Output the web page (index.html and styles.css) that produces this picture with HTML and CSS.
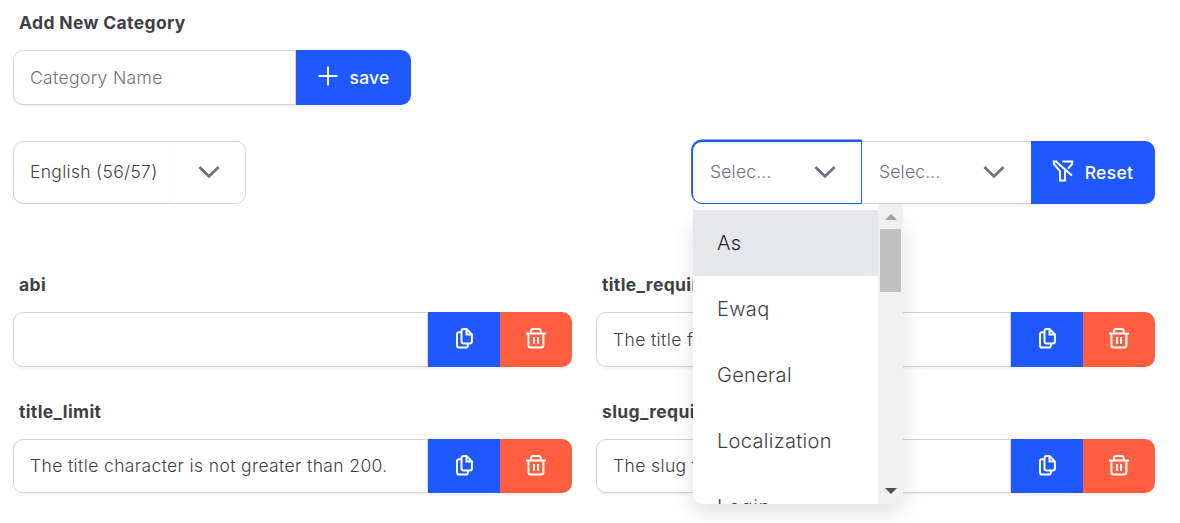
FILE: index.html
```html
<!DOCTYPE html>
<html lang="en">
<head>
<meta charset="utf-8">
<title>Categories</title>
<link rel="stylesheet" href="styles.css">
</head>
<body>
<svg class="sprite" aria-hidden="true">
  <symbol id="copy" viewBox="0 0 22 22"><path d="M8 5.3H6.2Q4 5.3 4 7.5V18.5Q4 20.6 6.2 20.6H12.7Q14.9 20.6 14.9 18.5V16.7M10.7 2H13.5L18.9 7.4V14.2Q18.9 16.4 16.7 16.4H10.7Q8.5 16.4 8.5 14.2V4.2Q8.5 2 10.7 2ZM13.5 2V7.4H18.9"/></symbol>
  <symbol id="trash" viewBox="0 0 22 22"><path d="M1 6.5H21M3.4 6.5V18Q3.4 20.5 5.8 20.5H16Q18.4 20.5 18.4 18V6.5M6 6V4.4Q6 2 8.4 2H13.4Q15.8 2 15.8 4.4V6M9 10V16.7M13 10V16.7"/></symbol>
  <symbol id="chevron" viewBox="0 0 22 14"><path d="M1.4 1.9L11 11.4L20.6 1.9"/></symbol>
</svg>
<main class="page">
  <h1 class="label">Add New Category</h1>
  <div class="group add">
    <div class="input placeholder">Category Name</div>
    <button class="btn save"><svg class="plus" viewBox="0 0 22 22"><path d="M11 1.5V20.5M1.5 11H20.5"/></svg><span>save</span></button>
  </div>
  <div class="toolbar">
    <div class="language"><span class="value">English (56/57)</span><svg class="chevron"><use href="#chevron"/></svg></div>
    <div class="filters">
      <div class="select active"><span>Selec...</span><svg class="chevron"><use href="#chevron"/></svg>
        <div class="menu">
          <div class="options">
            <div class="option selected">As</div>
            <div class="option">Ewaq</div>
            <div class="option">General</div>
            <div class="option">Localization</div>
            <div class="option">Login</div>
          </div>
          <div class="scrollbar"><i class="up"></i><i class="thumb"></i><i class="down"></i></div>
        </div>
      </div>
      <div class="select"><span>Selec...</span><svg class="chevron"><use href="#chevron"/></svg></div>
      <button class="btn reset"><svg class="funnel" viewBox="0 0 22 22"><path d="M5 1.5H1.8V3.8L8 11.2V20.6H13V10.6M4 1.5L19.9 15.5M10.2 1.5H20.2V3.8L16 8.6"/></svg><span>Reset</span></button>
    </div>
  </div>
  <div class="grid">
    <section><h2 class="label">abi</h2><div class="group"><div class="input"></div><button class="btn action"><svg class="icon"><use href="#copy"/></svg></button><button class="btn action danger"><svg class="icon"><use href="#trash"/></svg></button></div></section>
    <section><h2 class="label">title_required</h2><div class="group"><div class="input">The title field is required.</div><button class="btn action"><svg class="icon"><use href="#copy"/></svg></button><button class="btn action danger"><svg class="icon"><use href="#trash"/></svg></button></div></section>
    <section><h2 class="label">title_limit</h2><div class="group short"><div class="input">The title character is not greater than 200.</div><button class="btn action"><svg class="icon"><use href="#copy"/></svg></button><button class="btn action danger"><svg class="icon"><use href="#trash"/></svg></button></div></section>
    <section><h2 class="label">slug_required</h2><div class="group short"><div class="input">The slug field is required.</div><button class="btn action"><svg class="icon"><use href="#copy"/></svg></button><button class="btn action danger"><svg class="icon"><use href="#trash"/></svg></button></div></section>
  </div>
</main>
</body>
</html>
```
FILE: styles.css
```css
* { box-sizing: border-box; }
body { margin: 0; background: #fff; color: #3f3f46; font-family: Inter, sans-serif; font-size: 17.5px; font-weight: 400; }
.sprite { position: absolute; width: 0; height: 0; }
svg { fill: none; stroke: currentColor; stroke-width: 2; flex: none; }
.page { width: 1155px; height: 523px; padding: 10px 0 0 13px; }
.label { margin: 0; padding-left: 6px; height: 40px; line-height: 25px; font-size: 17.5px; font-weight: 650; letter-spacing: .36px; }
.group { display: flex; height: 55px; border-radius: 10px; box-shadow: 0 2px 3px rgba(0, 0, 0, .05); }
.short { height: 54px; }
.input { flex: 1; display: flex; align-items: center; padding: 0 16px; border: 1px solid #d1d5db; border-radius: 10px 0 0 10px; background: #fff; font-weight: 350; letter-spacing: .36px; white-space: nowrap; }
.grid .input { letter-spacing: .38px; }
.short .input { padding-bottom: 1px; }
.placeholder { color: #6b7280; }
.btn { display: flex; align-items: center; justify-content: center; margin: 0; padding: 0; border: 0; background: #1d59ff; color: #fff; font: 500 17.5px Inter, sans-serif; }
.add { width: 398px; }
.save { width: 115px; gap: 11px; border-radius: 0 10px 10px 0; padding-right: 1px; letter-spacing: .2px; }
.plus { width: 22px; height: 22px; margin-top: -3px; }
.toolbar { display: flex; justify-content: space-between; height: 63px; margin-top: 36px; font-weight: 350; letter-spacing: .2px; }
.language { display: flex; align-items: center; justify-content: space-between; width: 233px; padding: 0 25px 2px 0; border: 1px solid #d1d5db; border-radius: 10px; letter-spacing: .3px; }
.language .value { display: flex; align-items: center; align-self: stretch; width: 160px; margin-bottom: -2px; padding: 0 0 2px 16px; border-radius: 10px; box-shadow: 0 1px 2px rgba(0, 0, 0, .05); white-space: nowrap; }
.chevron { width: 22px; height: 14px; color: #6b7280; stroke-width: 2.8; }
.filters { display: flex; border-radius: 10px; box-shadow: 0 2px 3px rgba(0, 0, 0, .05); }
.select { position: relative; display: flex; align-items: center; justify-content: space-between; width: 169px; padding: 0 26px 2px 17px; border: solid #d1d5db; border-width: 1px 0; background: #fff; color: #6b7280; }
.active { z-index: 1; width: 170px; padding-right: 25px; border: 1px solid #1d59ff; border-radius: 10px 0 0 10px; box-shadow: -.5px -1px 0 .4px #1d59ff; }
.reset { width: 124px; gap: 11px; border-radius: 0 10px 10px 0; padding-right: 1px; letter-spacing: .3px; }
.funnel { width: 22px; height: 22px; margin-top: -3px; }
.grid { display: grid; grid-template-columns: 559px 559px; column-gap: 24px; row-gap: 32px; padding-top: 68px; }
.action { width: 72px; }
.danger { background: #ff5f40; border-radius: 0 10px 10px 0; }
.icon { width: 22px; height: 22px; margin-top: -3px; }
.short .icon { margin-top: -2px; }
.menu { position: absolute; top: 62px; left: 0; z-index: 2; display: flex; width: 210px; height: 300px; overflow: hidden; background: #fff; border-radius: 0 0 10px 10px; }
.active::after { content: ""; position: absolute; z-index: 1; top: 74px; left: 0; width: 210px; height: 288px; border-radius: 10px; box-shadow: 0 8px 20px rgba(0, 0, 0, .13); }
.options { width: 185px; padding-top: 6px; }
.option { height: 66px; padding-left: 24px; line-height: 66px; color: #3f3f46; font-size: 20px; letter-spacing: .32px; }
.selected { background: #e5e7eb; color: #27272a; }
.scrollbar { display: flex; flex-direction: column; align-items: center; width: 25px; padding: 10px 0; background: #f0f0f0; }
.up { border: solid transparent; border-width: 0 6px 6px; border-bottom-color: #a3a3a3; }
.down { border: solid transparent; border-width: 6px 6px 0; border-top-color: #505050; }
.thumb { width: 21px; height: 63px; margin: 9px 0 auto; background: #c1c1c1; }
```
